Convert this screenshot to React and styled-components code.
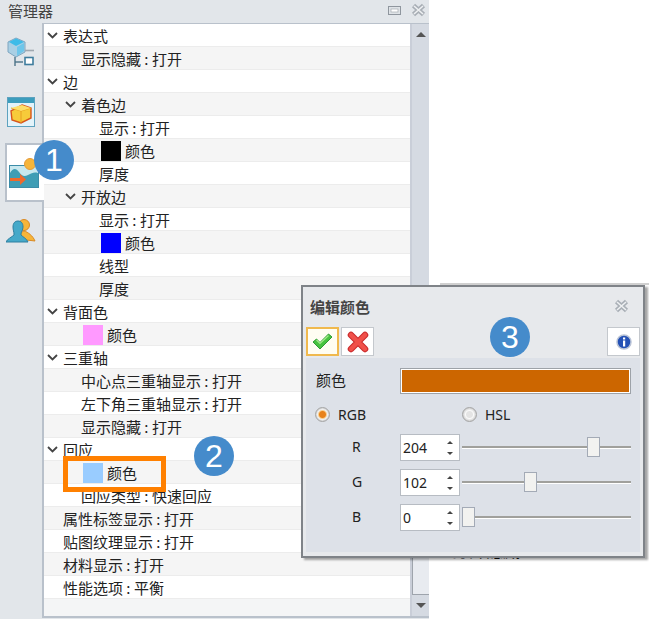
import React from "react";
import styled, { createGlobalStyle } from "styled-components";

const Global = createGlobalStyle`
  html, body { margin: 0; padding: 0; background: #fff; }
  body {
    width: 649px;
    height: 619px;
    overflow: hidden;
    font-family: "Noto Sans CJK SC", "Liberation Sans", sans-serif;
    color: #222;
  }
`;

const Page = styled.div`
  position: relative;
  width: 649px;
  height: 619px;
  overflow: hidden;
`;

const Panel = styled.div`
  width: 429px;
  height: 619px;
  background: #e2e6ea;
  display: flex;
  flex-direction: column;
`;

const PanelHead = styled.div`
  height: 23px;
  flex: none;
  display: flex;
  align-items: center;
  justify-content: space-between;
  padding: 0 3px 3px 8px;
  box-sizing: border-box;
  font-size: 15px;
  color: #444;
`;

const HeadIcons = styled.div`
  display: flex;
  align-items: center;
  gap: 10px;
`;

const PanelBody = styled.div`
  flex: 1;
  display: flex;
  min-height: 0;
`;

const Rail = styled.div`
  width: 42px;
  flex: none;
  display: flex;
  flex-direction: column;
`;

const RailTab = styled.div`
  height: ${({ $h }) => $h}px;
  display: flex;
  align-items: center;
  justify-content: center;
  box-sizing: border-box;
  flex: none;
  width: 42px;
  ${({ $active }) =>
    $active &&
    `width:39px;margin-left:5px;padding-right:3px;background:#fff;border:2px solid #b9c1cb;border-right:none;position:relative;z-index:1;`}
`;

const TreeBox = styled.div`
  flex: 1;
  display: flex;
  height: 595px;
  border-left: 2px solid #b9c1cb;
  border-top: 1px solid #b9c1cb;
  border-bottom: 2px solid #b9c1cb;
  box-sizing: border-box;
  background: #f4f5f6;
`;

const Tree = styled.div`
  flex: 1;
  min-width: 0;
`;

const Row = styled.div`
  height: 23px;
  box-sizing: border-box;
  display: flex;
  align-items: center;
  padding-left: ${({ $level }) => 3 + $level * 18}px;
  background: ${({ $alt }) => ($alt ? "#f5f5f5" : "#fff")};
  border-bottom: 1px solid #ececec;
  font-size: 15px;
  color: #222;
  white-space: nowrap;
`;

const Caret = styled.svg`
  display: block;
  width: 11px;
  height: 7px;
  margin: 0 5px 0 0;
  flex: none;
`;

const Swatch = styled.span`
  width: 20px;
  height: 20px;
  flex: none;
  margin: 2px 4px 0 2px;
  background: ${({ $color }) => $color};
`;

const Scrollbar = styled.div`
  width: 19px;
  flex: none;
  background: #d5dae2;
  border-left: 2px solid #c9ced8;
  display: flex;
  flex-direction: column;
  align-items: center;
  box-sizing: border-box;
`;

const ScrollBtn = styled.div`
  height: 21px;
  width: 100%;
  flex: none;
  display: flex;
  align-items: center;
  justify-content: center;
  background: #d5dae2;
`;

const ScrollTrack = styled.div`
  flex: 1;
  width: 100%;
`;

/* its top is hidden by the dialog */
const ScrollThumb = styled.div`
  height: 150px;
  width: 100%;
  flex: none;
  box-sizing: border-box;
  background: #e8ebf0;
  border-left: 1px solid #9ea4ac;
  border-bottom: 1px solid #9ea4ac;
`;

const Marker = styled.div`
  position: absolute;
  left: ${({ $x }) => $x}px;
  top: ${({ $y }) => $y}px;
  width: 40px;
  height: 40px;
  border-radius: 50%;
  background: #458bcb;
  color: #fff;
  font-family: "Liberation Sans", sans-serif;
  font-size: 32px;
  line-height: 40px;
  text-align: center;
  z-index: 5;
`;

const Highlight = styled.div`
  position: absolute;
  left: 63px;
  top: 456px;
  width: 103px;
  height: 36px;
  border: 5px solid #ff8000;
  box-sizing: border-box;
  z-index: 4;
`;

const HiddenText = styled.div`
  position: absolute;
  left: 452px;
  top: 539px;
  font-size: 17px;
  line-height: 21px;
  color: #111;
  white-space: nowrap;
`;

const BackStrip = styled.div`
  position: absolute;
  left: 440px;
  right: 0;
  top: 283px;
  height: 2px;
  background: #d0d0d0;
`;

const Dialog = styled.div`
  position: absolute;
  left: 301px;
  top: 285px;
  width: 344px;
  height: 273px;
  background: #e7e9ec;
  border: 2px solid #7f8388;
  box-sizing: border-box;
  box-shadow: 3px 2px 2px rgba(0, 0, 0, 0.35);
  z-index: 3;
  display: flex;
  flex-direction: column;
`;

const DialogHead = styled.div`
  height: 40px;
  flex: none;
  display: flex;
  align-items: center;
  justify-content: space-between;
  padding: 0 14px 2px 7px;
  box-sizing: border-box;
  font-size: 15px;
  font-weight: 700;
  color: #444;
`;

const DialogTools = styled.div`
  height: 31px;
  flex: none;
  display: flex;
  gap: 2px;
  padding: 0 0 0 3px;
  width: 337px;
  box-sizing: border-box;
`;

const ToolBtn = styled.div`
  width: 33px;
  height: 29px;
  box-sizing: border-box;
  background: ${({ $on }) => ($on ? "#fffdf2" : "#fff")};
  border: ${({ $on }) => ($on ? "2px solid #f0b94e" : "1px solid #c4c8cd")};
  display: flex;
  align-items: center;
  justify-content: center;
  margin-left: ${({ $push }) => ($push ? "auto" : "0")};
`;

const DialogBody = styled.div`
  margin-left: 3px;
  width: 334px;
  height: 194px;
  flex: none;
  background: #dde1e8;
  display: flex;
  flex-direction: column;
  font-family: "Noto Sans", "Noto Sans CJK SC", sans-serif;
  font-size: 14px;
  color: #222;
`;

const ColorRow = styled.div`
  display: flex;
  align-items: center;
  padding: 10px 0 0 10px;
  height: 36px;
  box-sizing: border-box;
  font-family: "Noto Sans CJK SC", sans-serif;
  font-size: 15px;
`;

const ColorLabel = styled.span`
  width: 84px;
  flex: none;
  padding-bottom: 4px;
`;

const ColorBar = styled.div`
  width: 231px;
  height: 26px;
  box-sizing: border-box;
  background: #cc6600;
  border: 1px solid #9da2a8;
  box-shadow: inset 0 0 0 1px #fff;
`;

const ModeRow = styled.div`
  display: flex;
  align-items: center;
  height: 40px;
  padding-left: 9px;
  box-sizing: border-box;
`;

const Mode = styled.label`
  display: flex;
  align-items: center;
  gap: 8px;
  width: 147px;
`;

const Radio = styled.span`
  width: 15px;
  height: 15px;
  border-radius: 50%;
  box-sizing: border-box;
  flex: none;
  border: 1px solid #a5a5a5;
  background: ${({ $on }) =>
    $on
      ? "radial-gradient(circle, #e8821a 0 3px, #f9cf8e 4px, #f0f0f0 5px, #c8c8c8 7px)"
      : "radial-gradient(circle, #e4e4e4 0 3px, #fafafa 4px, #e8e8e8 5px, #c8c8c8 7px)"};
`;

const Channels = styled.div`
  display: flex;
  flex-direction: column;
  gap: 8px;
`;

const ChannelRow = styled.div`
  display: flex;
  align-items: center;
  height: 27px;
`;

const ChannelName = styled.span`
  width: 94px;
  padding: 0 0 2px 46px;
  box-sizing: border-box;
  flex: none;
`;

const Spin = styled.div`
  width: 60px;
  height: 27px;
  box-sizing: border-box;
  background: #fff;
  border: 1px solid #b7bcc3;
  display: flex;
  align-items: center;
  justify-content: space-between;
  padding: 0 6px 0 2px;
  font-size: 14px;
  flex: none;
`;

const SpinArrows = styled.span`
  display: flex;
  flex-direction: column;
  gap: 8px;
`;

const Arrow = styled.span`
  width: 0;
  height: 0;
  border-left: 3px solid transparent;
  border-right: 3px solid transparent;
  ${({ $down }) =>
    $down ? "border-top: 3px solid #444;" : "border-bottom: 3px solid #444;"}
`;

const Track = styled.div`
  position: relative;
  width: 169px;
  height: 2px;
  margin: 0 0 1px 2px;
  background: #a0a09c;
  border-bottom: 1px solid #fff;
  box-sizing: content-box;
`;

const Thumb = styled.div`
  position: absolute;
  top: -9px;
  width: 13px;
  height: 20px;
  background: #f2f2f0;
  border: 1px solid #a3aab6;
  box-sizing: border-box;
`;

const Tri = styled.span`
  width: 0;
  height: 0;
  border-left: 5px solid transparent;
  border-right: 5px solid transparent;
  ${({ $down }) =>
    $down ? "border-top: 5px solid #555;" : "border-bottom: 5px solid #555;"}
`;

const CloseMark = () => (
  <svg width="15" height="14" viewBox="0 0 15 14">
    <path d="M2.5 2.5l10 9M12.5 2.5l-10 9" stroke="#a9afb6" strokeWidth="4.6" fill="none" />
    <path d="M3 3l9 8M12 3l-9 8" stroke="#eef0f2" strokeWidth="1.6" fill="none" />
  </svg>
);

const Chevron = () => (
  <Caret viewBox="0 0 11 7">
    <path d="M1 1l4.5 4.5L10 1" stroke="#444" strokeWidth="1.8" fill="none" />
  </Caret>
);

const rows = [
  { level: 0, caret: true, text: "表达式" },
  { level: 1, text: "显示隐藏 : 打开" },
  { level: 0, caret: true, text: "边" },
  { level: 1, caret: true, text: "着色边" },
  { level: 2, text: "显示 : 打开" },
  { level: 2, swatch: "#000", text: "颜色" },
  { level: 2, text: "厚度" },
  { level: 1, caret: true, text: "开放边" },
  { level: 2, text: "显示 : 打开" },
  { level: 2, swatch: "#0000ff", text: "颜色" },
  { level: 2, text: "线型" },
  { level: 2, text: "厚度" },
  { level: 0, caret: true, text: "背面色" },
  { level: 1, swatch: "#ff99ff", text: "颜色" },
  { level: 0, caret: true, text: "三重轴" },
  { level: 1, text: "中心点三重轴显示 : 打开" },
  { level: 1, text: "左下角三重轴显示 : 打开" },
  { level: 1, text: "显示隐藏 : 打开" },
  { level: 0, caret: true, text: "回应" },
  { level: 1, swatch: "#99ccff", text: "颜色" },
  { level: 1, text: "回应类型 : 快速回应" },
  { level: 0, text: "属性标签显示 : 打开" },
  { level: 0, text: "贴图纹理显示 : 打开" },
  { level: 0, text: "材料显示 : 打开" },
  { level: 0, text: "性能选项 : 平衡" },
];

const channels = [
  { name: "R", value: 204 },
  { name: "G", value: 102 },
  { name: "B", value: 0 },
];

const AssemblyIcon = () => (
  <svg width="28" height="30" viewBox="0 0 28 30">
    <path d="M9 1l9 4v10l-9 5-8-5V5z" fill="#a9cfe4" stroke="#7fa6c0" />
    <path d="M2 5l7-3.5L17 5l-8 4z" fill="#3dbbe8" />
    <path d="M10 10l7-4v8l-7 5z" fill="#6ec6ea" />
    <path d="M18 13.5h9" stroke="#a0a8b0" strokeWidth="1.6" />
    <path d="M8 20v9" stroke="#4d7388" strokeWidth="1.4" />
    <path d="M8 25h8" stroke="#4d7388" strokeWidth="1.4" />
    <rect x="18" y="20.5" width="8" height="7" fill="#fff" stroke="#3f7d9e" strokeWidth="1.6" />
  </svg>
);

const BoxWindowIcon = () => (
  <svg width="28" height="30" viewBox="0 0 28 30">
    <rect x="0.5" y="0.5" width="27" height="29" fill="#e3f3fa" stroke="#5da2bf" />
    <rect x="1" y="1" width="26" height="5" fill="#3c9dbd" />
    <path d="M15 8l9 3v10l-10 5-9-3-1-9z" fill="#f7cb3a" stroke="#d8541c" strokeWidth="1.4" />
    <path d="M4 11l10 3 10-3M14 14v12" stroke="#e8a020" fill="none" />
    <path d="M4 11l11-3 9 3-10 3z" fill="#fde06a" />
  </svg>
);

const SceneIcon = () => (
  <svg width="30" height="30" viewBox="0 0 30 30">
    <rect x="0.5" y="7.5" width="29" height="22" fill="#c8e8ef" stroke="#3c8ca8" />
    <path d="M1 15c3-5 6-5 9-1s5 5 9 3 6-3 10-2v14H1z" fill="#3f9db5" />
    <circle cx="21" cy="6" r="5.5" fill="#f6b53a" stroke="#e39a3a" />
    <path d="M1 20h10v-4l6 5.5-6 5.5v-4H1z" fill="#ee6a2c" />
  </svg>
);

const UsersIcon = () => (
  <svg width="30" height="24" viewBox="0 0 30 24">
    <circle cx="18" cy="6" r="5.5" fill="#f6b53a" stroke="#d98a25" />
    <path d="M12 20c2-5 3-7 6-8 4 1 9 5 11 10z" fill="#f6b53a" stroke="#d98a25" />
    <path d="M7 8c0-4 2-6 5-6s5 2 5 6c0 3-2 5-2 7l0 1c2 2 6 4 7 7H0c1-3 6-5 8-7l0-1c0-2-1-4-1-7z" fill="#45a9c9" stroke="#2d7fa0" />
  </svg>
);

export default function App() {
  return (
    <Page>
      <Global />
      <Panel>
        <PanelHead>
          <span>管理器</span>
          <HeadIcons>
            <svg width="13" height="9" viewBox="0 0 13 9">
              <rect x="0.5" y="0.5" width="12" height="8" fill="#dfe3e7" stroke="#8f969e" />
              <rect x="3" y="3" width="7" height="3" fill="#fff" stroke="#a5abb2" strokeWidth="0.7" />
            </svg>
            <CloseMark />
          </HeadIcons>
        </PanelHead>
        <PanelBody>
          <Rail>
            <RailTab $h={58}><AssemblyIcon /></RailTab>
            <RailTab $h={62}><BoxWindowIcon /></RailTab>
            <RailTab $h={59} $active><SceneIcon /></RailTab>
            <RailTab $h={58}><UsersIcon /></RailTab>
          </Rail>
          <TreeBox>
            <Tree>
              {rows.map((row, i) => (
                <Row key={i} $level={row.level} $alt={i % 2 === 1}>
                  {row.caret ? <Chevron /> : <Caret as="span" />}
                  {row.swatch && <Swatch $color={row.swatch} />}
                  {row.text}
                </Row>
              ))}
            </Tree>
            <Scrollbar>
              <ScrollBtn><Tri /></ScrollBtn>
              <ScrollTrack />
              <ScrollThumb />
              <ScrollBtn><Tri $down /></ScrollBtn>
            </Scrollbar>
          </TreeBox>
        </PanelBody>
      </Panel>

      <BackStrip />
      <HiddenText>打开隐藏</HiddenText>

      <Marker $x={34} $y={140}>1</Marker>
      <Marker $x={194} $y={436}>2</Marker>
      <Marker $x={490} $y={317}>3</Marker>
      <Highlight />

      <Dialog>
        <DialogHead>
          <span>编辑颜色</span>
          <CloseMark />
        </DialogHead>
        <DialogTools>
          <ToolBtn $on>
            <svg width="21" height="17" viewBox="0 0 21 17">
              <path d="M1 9l3.5-3 3.5 3.5L16.5 1 20 4 8 16z" fill="#47c23f" stroke="#2f9a33" strokeLinejoin="round" />
              <path d="M4.5 7l3.5 3.5L16.5 2.5" stroke="#a4ec8a" strokeWidth="1.2" fill="none" />
            </svg>
          </ToolBtn>
          <ToolBtn>
            <svg width="22" height="22" viewBox="0 0 22 22">
              <path d="M4 4l14 14M18 4L4 18" stroke="#c92a2c" strokeWidth="6.5" strokeLinecap="round" />
              <path d="M4 4l14 14M18 4L4 18" stroke="#f0504a" strokeWidth="4.5" strokeLinecap="round" />
            </svg>
          </ToolBtn>
          <ToolBtn $push>
            <svg width="16" height="16" viewBox="0 0 16 16">
              <circle cx="8" cy="8" r="7" fill="#2451b5" stroke="#b9c3d6" strokeWidth="1.5" />
              <rect x="7" y="3.5" width="2.2" height="2" fill="#fff" />
              <rect x="7" y="6.5" width="2.2" height="6" fill="#fff" />
            </svg>
          </ToolBtn>
        </DialogTools>
        <DialogBody>
          <ColorRow>
            <ColorLabel>颜色</ColorLabel>
            <ColorBar />
          </ColorRow>
          <ModeRow>
            <Mode><Radio $on />RGB</Mode>
            <Mode><Radio />HSL</Mode>
          </ModeRow>
          <Channels>
            {channels.map((c) => (
              <ChannelRow key={c.name}>
                <ChannelName>{c.name}</ChannelName>
                <Spin>
                  {c.value}
                  <SpinArrows><Arrow /><Arrow $down /></SpinArrows>
                </Spin>
                <Track>
                  <Thumb style={{ left: (c.value / 255) * 156 }} />
                </Track>
              </ChannelRow>
            ))}
          </Channels>
        </DialogBody>
      </Dialog>
    </Page>
  );
}
